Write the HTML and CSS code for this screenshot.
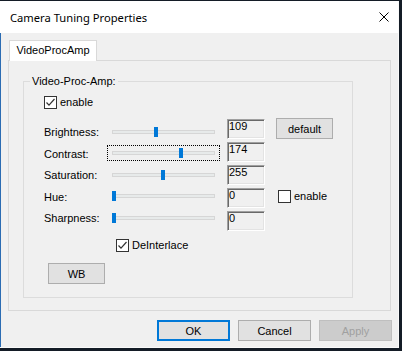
FILE: index.html
```html
<!DOCTYPE html>
<html lang="en">
    <head>
        <meta charset="UTF-8" />
        <title>Camera Tuning Properties</title>
        <link rel="stylesheet" href="styles.css">
    </head>
    <body>
        <div class="window">
            <div class="titlebar">
                <span class="title">Camera Tuning Properties</span>
                <svg class="close" width="10" height="10" viewBox="0 0 10 10">
                    <path d="M0.5 0.5L9.5 9.5M9.5 0.5L0.5 9.5" stroke="#000" stroke-width="1" fill="none" />
                </svg>
            </div>

            <div class="client">
                <div class="tabs">
                    <div class="tab">VideoProcAmp</div>
                </div>

                <div class="page">
                    <fieldset class="group">
                        <legend>Video-Proc-Amp:</legend>
                        <div class="group-body">
                            <label class="check">
                                <span class="box">
                                    <svg width="11" height="11" viewBox="0 0 11 11">
                                        <path d="M1.5 5.5L4 8.2L9.5 2" stroke="#333" stroke-width="1.2" fill="none" />
                                    </svg>
                                </span>
                                enable
                            </label>

                            <div class="controls">
                                <div class="sliders">
                                    <div class="srow">
                                        <span class="slabel">Brightness:</span>
                                        <div class="slider">
                                            <div class="track"></div>
                                            <div class="thumb" style="left: 46px"></div>
                                        </div>
                                    </div>
                                    <div class="srow">
                                        <span class="slabel">Contrast:</span>
                                        <div class="slider focus">
                                            <div class="track"></div>
                                            <div class="thumb" style="left: 71px"></div>
                                        </div>
                                    </div>
                                    <div class="srow">
                                        <span class="slabel">Saturation:</span>
                                        <div class="slider">
                                            <div class="track"></div>
                                            <div class="thumb" style="left: 53px"></div>
                                        </div>
                                    </div>
                                    <div class="srow">
                                        <span class="slabel">Hue:</span>
                                        <div class="slider">
                                            <div class="track"></div>
                                            <div class="thumb" style="left: 4px"></div>
                                        </div>
                                    </div>
                                    <div class="srow">
                                        <span class="slabel">Sharpness:</span>
                                        <div class="slider">
                                            <div class="track"></div>
                                            <div class="thumb" style="left: 4px"></div>
                                        </div>
                                    </div>
                                </div>

                                <div class="values">
                                    <div class="edit">109</div>
                                    <div class="edit">174</div>
                                    <div class="edit">255</div>
                                    <div class="edit">0</div>
                                    <div class="edit">0</div>
                                </div>

                                <div class="extras">
                                    <button class="btn">default</button>
                                    <label class="check hue">
                                        <span class="box"></span>
                                        enable
                                    </label>
                                </div>
                            </div>

                            <label class="check deint">
                                <span class="box">
                                    <svg width="11" height="11" viewBox="0 0 11 11">
                                        <path d="M1.5 5.5L4 8.2L9.5 2" stroke="#333" stroke-width="1.2" fill="none" />
                                    </svg>
                                </span>
                                DeInterlace
                            </label>

                            <button class="btn wb">WB</button>
                        </div>
                    </fieldset>
                </div>

                <div class="buttons">
                    <button class="btn dlg ok">OK</button>
                    <button class="btn dlg">Cancel</button>
                    <button class="btn dlg apply">Apply</button>
                </div>
            </div>
        </div>
    </body>
</html>
```

FILE: styles.css
```css
body {
    margin: 0;
    background: #141c26;
    font-family: "Liberation Sans", Arial, sans-serif;
    font-size: 11px;
    color: #000;
}

.window {
    width: 399px;
    height: 347px;
    margin-top: 1px;
    box-sizing: border-box;
    background: #f0f0f0;
    border-right: 1px solid #fafafa;
    border-bottom: 1px solid #fafafa;
    display: flex;
    flex-direction: column;
}

.titlebar {
    height: 32px;
    flex: none;
    background: #fff;
    display: flex;
    align-items: center;
    justify-content: space-between;
    padding: 0 9px 0 10px;
}

.title {
    font-family: "Noto Sans", sans-serif;
    font-size: 11.2px;
}

.close {
    display: block;
}

.client {
    flex: 1;
    border-left: 1px solid #2b6cb3;
    padding: 7px 6px 0 7px;
}

.tabs {
    display: flex;
    padding-left: 1px;
    position: relative;
    z-index: 1;
    margin-bottom: -1px;
}

.tab {
    width: 88px;
    height: 21px;
    box-sizing: border-box;
    border: 1px solid #d9d9d9;
    border-bottom: none;
    background: #fff;
    text-align: center;
    line-height: 19px;
}

.page {
    width: 383px;
    height: 251px;
    box-sizing: border-box;
    border: 1px solid #d9d9d9;
    padding-left: 14px;
}

.group {
    margin: 14px 0 0 0;
    padding: 0;
    width: 330px;
    height: 223px;
    box-sizing: border-box;
    border: 1px solid #dcdcdc;
    min-inline-size: auto;
}

.group legend {
    margin-left: 6px;
    padding: 0 2px;
    line-height: 13px;
}

.group-body {
    padding: 8px 0 0 20px;
}

.check {
    display: flex;
    align-items: center;
    gap: 3px;
    height: 13px;
    line-height: 13px;
}

.box {
    width: 13px;
    height: 13px;
    box-sizing: border-box;
    border: 1px solid #333;
    background: #fff;
    display: flex;
}

.controls {
    display: flex;
    align-items: flex-start;
    margin-top: 9px;
}

.sliders {
    margin-top: 3px;
}

.srow {
    display: flex;
    align-items: center;
    height: 21.5px;
}

.slabel {
    width: 63px;
    padding-top: 1px;
}

.slider {
    position: relative;
    width: 113px;
    height: 16px;
    box-sizing: border-box;
    border: 1px dotted transparent;
}

.slider.focus {
    border-color: #000;
}

.track {
    margin: 5px 0 0 4px;
    width: 103px;
    height: 4px;
    box-sizing: border-box;
    background: #e7eaea;
    border: 1px solid #d6d6d6;
}

.thumb {
    position: absolute;
    top: 2px;
    width: 4px;
    height: 10px;
    background: #0078d7;
}

.values {
    display: flex;
    flex-direction: column;
    gap: 3px;
    margin: 1px 0 0 7px;
}

.edit {
    width: 38px;
    height: 20px;
    box-sizing: border-box;
    border: 1px solid;
    border-color: #a0a0a0 #fff #fff #a0a0a0;
    box-shadow: inset 1px 1px #696969, inset -1px -1px #e3e3e3;
    background: #f0f0f0;
    padding: 0 0 0 1px;
    line-height: 13px;
}

.extras {
    display: flex;
    flex-direction: column;
    align-items: flex-start;
    margin-left: 11px;
}

.btn {
    width: 57px;
    height: 21px;
    box-sizing: border-box;
    border: 1px solid #adadad;
    background: #e1e1e1;
    font: inherit;
    color: #000;
    padding: 0;
}

.hue {
    margin: 51px 0 0 2px;
}

.deint {
    margin: 8px 0 0 72px;
}

.wb {
    display: block;
    margin: 11px 0 0 4px;
}

.buttons {
    display: flex;
    justify-content: flex-end;
    gap: 8px;
    margin-top: 9px;
}

.dlg {
    width: 73px;
}

.ok {
    border: 2px solid #0078d7;
}

.apply {
    background: #cccccc;
    border-color: #bfbfbf;
    color: #a0a0a0;
}
```
